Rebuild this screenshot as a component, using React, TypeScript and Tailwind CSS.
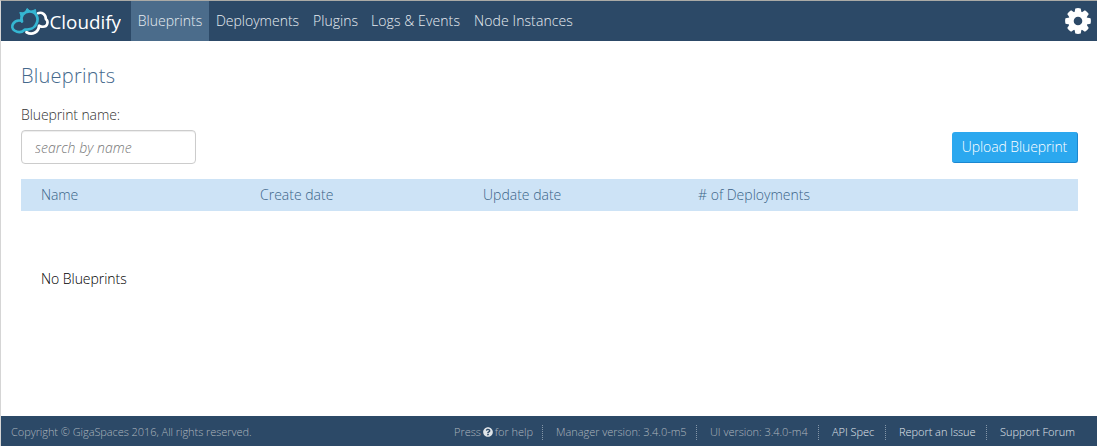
import React from "react";
import { FaQuestionCircle } from "react-icons/fa";

const nav = [
  { label: "Blueprints", w: "w-[78px]", active: true },
  { label: "Deployments", w: "w-[97px]" },
  { label: "Plugins", w: "w-[58px] pl-px" },
  { label: "Logs & Events", w: "w-[103px] tracking-[0.1px]" },
  { label: "Node Instances", w: "w-[113px] tracking-[0.1px]" },
];

const teeth = [0, 45, 90, 135, 180, 225, 270, 315];

function Gear() {
  return (
    <svg className="mr-[6px] mt-[7px]" width="26" height="26" viewBox="-13 -13 26 26">
      <circle r="7" fill="none" stroke="currentColor" strokeWidth="5.400" />
      {teeth.map((a) => (
        <path key={a} d="M-3.500-8.500L-2.700-12.500Q0-13.300 2.700-12.500L3.500-8.500Z" fill="currentColor" transform={`rotate(${a})`} />
      ))}
    </svg>
  );
}

function Logo() {
  return (
    <svg width="120" height="40" viewBox="0 0 120 40" fill="none" strokeLinecap="round" strokeLinejoin="round">
      <path d="M37 12.200C41 10.800 45 13.500 44.800 18C48 20.500 46.500 25.800 42 25.800Q40 25.800 38.500 24.800" stroke="white" strokeWidth="2.600" />
      <path d="M38 24.800C37.500 31.500 31 34.500 25.500 31.200" stroke="white" strokeWidth="2.800" />
      <path d="M20.500 19.800C12.500 18 8.500 26 13.500 29.500C18 32.500 21.500 31 24 28.500C29 29 34 27 35.500 22.500C38.500 16.500 34.500 10.500 28.500 10.500C22.500 10.500 19 15.500 21 20.500" stroke="#35b6d2" strokeWidth="2.700" />
      <path d="M20 15L18.800 11.500L23 12ZM24.500 10.500L26 7.500L29 10ZM31 10L34.500 8.500L35 12.500Z" fill="#35b6d2" stroke="#35b6d2" strokeWidth="1" />
      <text x="48.500" y="28" fill="white" fontSize="19" fontWeight="400" fontFamily="Open Sans" textLength="71.500" lengthAdjust="spacingAndGlyphs">Cloudify</text>
    </svg>
  );
}

const info = "flex h-[15px] items-center whitespace-nowrap border-r border-dotted border-[#8496a8]";

export default function App() {
  return (
    <div className="flex h-[446px] w-[1097px] flex-col border-l border-t border-l-[#d5d5d5] border-t-[#aaaaa6] bg-white font-['Open_Sans',sans-serif] text-[14px] font-light text-[#333]">
      <header className="flex h-10 shrink-0 bg-[#2c4967] text-[#e8edf2]">
        <div className="w-[130px]"><Logo /></div>
        {nav.map((n) => (
          <a key={n.label} className={`${n.w} flex items-center justify-center whitespace-nowrap pb-px ${n.active ? "bg-[#4b6c8b]" : ""}`}>{n.label}</a>
        ))}
        <div className="ml-auto text-white"><Gear /></div>
      </header>
      <main className="flex-1 pl-5 pr-[19px]">
        <h1 className="mt-[21px] text-[20px] leading-[28px] tracking-[0.25px] text-[#44688c]">Blueprints</h1>
        <label className="mt-[15px] block leading-5 tracking-[-0.1px]">Blueprint name:</label>
        <div className="mt-[5px] flex items-center justify-between">
          <input placeholder="search by name" className="h-[34px] w-[175px] rounded-[4px] border border-[#ccc] pl-[13px] pr-3 italic tracking-[0.05px] shadow-[inset_0_1px_1px_rgba(0,0,0,0.075)] placeholder:text-[#777]" />
          <button className="mt-px h-[31px] w-[126px] rounded-[3px] border-b border-r border-[#1b87d0] bg-[#2ba8ef] pb-px tracking-[-0.1px] text-white">Upload Blueprint</button>
        </div>
        <div className="mt-[15px] flex h-8 items-center bg-[#cde3f6] pb-px pl-5 text-[#3b6488]">
          <span className="w-[219px] tracking-[-0.1px]">Name</span>
          <span className="w-[223px]">Create date</span>
          <span className="w-[215px]">Update date</span>
          <span># of Deployments</span>
        </div>
        <p className="mt-[58px] pl-5 leading-5 tracking-[-0.05px] text-black">No Blueprints</p>
      </main>
      <footer className="flex h-[30px] shrink-0 items-center bg-[#2c4967] pl-[10px] text-[11px] text-[#adb5bd]">
        <span className="mt-[3px] tracking-[-0.06px]">Copyright © GigaSpaces 2016, All rights reserved.</span>
        <div className="ml-auto flex w-[643px] pt-0.5 tracking-[-0.04px]">
          <span className={`${info} w-[89px] gap-[2px]`}>Press <FaQuestionCircle size={10} className="text-[#e0e4e8]" /> for help</span>
          <span className={`${info} w-[154px] pl-[13px]`}>Manager version: 3.4.0-m5</span>
          <span className={`${info} w-[122px] pl-[13px]`}>UI version: 3.4.0-m4</span>
          <span className={`${info} w-[67px] pl-[13px] text-[#e0e6ec]`}>API Spec</span>
          <span className={`${info} w-[101px] pl-[13px] text-[#e0e6ec]`}>Report an Issue</span>
          <span className="flex h-[15px] items-center whitespace-nowrap pl-[13px] text-[#e0e6ec]">Support Forum</span>
        </div>
      </footer>
    </div>
  );
}
